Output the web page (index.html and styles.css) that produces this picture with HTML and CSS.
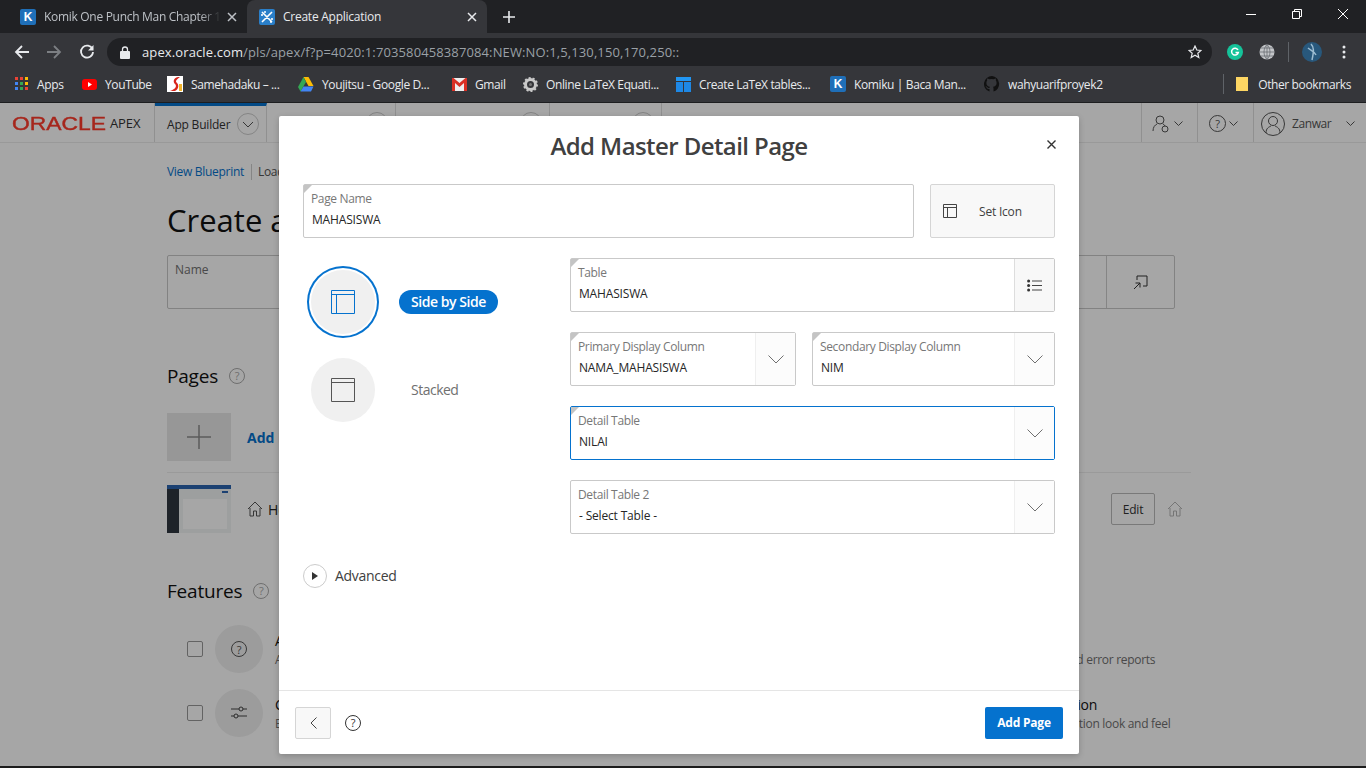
FILE: index.html
```html
<!DOCTYPE html>
<html lang="en">
<head>
<meta charset="utf-8">
<title>Create Application</title>
<link rel="stylesheet" href="styles.css">
</head>
<body>
<div class="browser">
  <div class="tabstrip">
    <div class="tab">
      <span class="fav fav-k">K</span>
      <span class="tab-title tab-fade">Komik One Punch Man Chapter 1</span>
      <svg class="tab-x" width="10" height="10" viewBox="0 0 10 10"><path d="M1 1l8 8M9 1l-8 8" stroke="#bdc1c6" stroke-width="1.5"/></svg>
    </div>
    <div class="tab tab-active">
      <svg class="fav-svg" width="16" height="16" viewBox="0 0 16 16"><rect width="16" height="16" rx="2" fill="#2a7fc9"/><path d="M3 3l10 10M13 3L3 13M5 3h2M3 5v2M11 13h2M13 9v2" stroke="#fff" stroke-width="1.6" fill="none"/></svg>
      <span class="tab-title tab-title-on">Create Application</span>
      <svg class="tab-x" width="10" height="10" viewBox="0 0 10 10"><path d="M1 1l8 8M9 1l-8 8" stroke="#e8eaed" stroke-width="1.5"/></svg>
    </div>
    <svg class="newtab" width="12" height="12" viewBox="0 0 12 12"><path d="M6 0v12M0 6h12" stroke="#e8eaed" stroke-width="1.6"/></svg>
    <div class="winctl">
      <svg width="10" height="10" viewBox="0 0 10 10"><path d="M0 5.5h10" stroke="#fff"/></svg>
      <svg width="10" height="10" viewBox="0 0 10 10"><path d="M.5 2.5h7v7h-7zM2.5 2.5v-2h7v7h-2" stroke="#fff" fill="none"/></svg>
      <svg width="10" height="10" viewBox="0 0 10 10"><path d="M0 0l10 10M10 0L0 10" stroke="#fff"/></svg>
    </div>
  </div>
  <div class="toolbar">
    <svg class="nav-ic" width="16" height="16" viewBox="0 0 16 16"><path d="M15 8H2M8 2L2 8l6 6" stroke="#e8eaed" stroke-width="1.8" fill="none"/></svg>
    <svg class="nav-ic" width="16" height="16" viewBox="0 0 16 16"><path d="M1 8h13M8 2l6 6-6 6" stroke="#7c7f83" stroke-width="1.8" fill="none"/></svg>
    <svg class="nav-ic" width="16" height="16" viewBox="0 0 16 16"><path d="M13.5 5.2A6 6 0 1 0 14 8" stroke="#e8eaed" stroke-width="1.8" fill="none"/><path d="M14.5 1v5.5H9z" fill="#e8eaed"/></svg>
    <div class="omnibox">
      <svg width="10" height="13" viewBox="0 0 10 13"><path d="M2.5 5V3.5a2.5 2.5 0 0 1 5 0V5" stroke="#e8eaed" stroke-width="1.3" fill="none"/><rect y="5" width="10" height="8" rx="1" fill="#e8eaed"/></svg>
      <span class="url"><span class="url-host">apex.oracle.com</span>/pls/apex/f?p=4020:1:703580458387084:NEW:NO:1,5,130,150,170,250::</span>
      <svg class="star" width="14" height="14" viewBox="0 0 14 14"><path d="M7 1l1.8 4 4.2.4-3.2 2.8 1 4.3L7 10.3l-3.8 2.2 1-4.3L1 5.4 5.2 5z" stroke="#e8eaed" stroke-width="1.2" fill="none"/></svg>
    </div>
    <div class="ext-icons">
      <svg width="16" height="16" viewBox="0 0 16 16"><circle cx="8" cy="8" r="8" fill="#15c39a"/><path d="M11 6a3.4 3.4 0 1 0 .3 2.5H8.500" stroke="#fff" stroke-width="1.5" fill="none"/></svg>
      <svg width="16" height="16" viewBox="0 0 16 16"><circle cx="8" cy="8" r="7.5" fill="#c4c6c9"/><path d="M0 8h16M8 0v16M1.500 4h13M1.500 12h13M8 .5c-4 4-4 11 0 15M8 .5c4 4 4 11 0 15" stroke="#5f6368" stroke-width=".7" fill="none"/></svg>
      <span class="ext-sep"></span>
      <svg class="avatar" width="20" height="20" viewBox="0 0 20 20"><circle cx="10" cy="10" r="10" fill="#28587c"/><path d="M9 2c3 3 3 7 1 16M6 6c2 2 6 3 8 7" stroke="#9dbdd2" stroke-width="1.500" fill="none"/></svg>
      <svg class="kebab" width="4" height="14" viewBox="0 0 4 14"><circle cx="2" cy="2" r="1.500" fill="#e8eaed"/><circle cx="2" cy="7" r="1.500" fill="#e8eaed"/><circle cx="2" cy="12" r="1.500" fill="#e8eaed"/></svg>
    </div>
  </div>
  <div class="bookmarks">
    <div class="bm">
      <svg width="14" height="14" viewBox="0 0 14 14"><path d="M0 0h3v3H0z" fill="#ea4335"/><path d="M5 0h3v3H5z" fill="#ea4335"/><path d="M10 0h3v3h-3z" fill="#fbbc05"/><path d="M0 5h3v3H0z" fill="#4285f4"/><path d="M5 5h3v3H5z" fill="#34a853"/><path d="M10 5h3v3h-3z" fill="#fbbc05"/><path d="M0 10h3v3H0z" fill="#4285f4"/><path d="M5 10h3v3H5z" fill="#34a853"/><path d="M10 10h3v3h-3z" fill="#ea4335"/></svg>
      <span>Apps</span>
    </div>
    <div class="bm">
      <svg width="15" height="15" viewBox="0 0 15 15"><rect y="2" width="15" height="11" rx="3" fill="#f00"/><path d="M6 5l4 2.500L6 10z" fill="#fff"/></svg>
      <span>YouTube</span>
    </div>
    <div class="bm">
      <svg width="16" height="16" viewBox="0 0 16 16"><rect width="16" height="16" fill="#fff"/><path d="M11 1C6 2 6 6 8 8s1 5-5 7h5c4-2 4-6 2-8S9 4 13 1z" fill="#d8261c"/><path d="M12 8v7h3V8z" fill="#f1b32a"/></svg>
      <span>Samehadaku – ...</span>
    </div>
    <div class="bm">
      <svg width="16" height="15" viewBox="0 0 16 15"><path d="M5.500 0h5l5 9h-5z" fill="#fbbc05"/><path d="M5.500 0L0 10l2.500 4.500L8 5z" fill="#34a853"/><path d="M2.500 14.500h10.500l2.500-5H5.500z" fill="#4285f4"/></svg>
      <span>Youjitsu - Google D...</span>
    </div>
    <div class="bm">
      <svg width="15" height="13" viewBox="0 0 15 13"><rect width="15" height="13" fill="#eee"/><path d="M0 0v13h3V5l4.500 4L12 5v8h3V0h-1.500L7.500 5 1.500 0z" fill="#d93025"/></svg>
      <span>Gmail</span>
    </div>
    <div class="bm">
      <svg width="15" height="15" viewBox="0 0 15 15"><circle cx="7.500" cy="7.500" r="5" fill="none" stroke="#c9c9c9" stroke-width="3"/><circle cx="7.500" cy="7.500" r="6.500" fill="none" stroke="#c9c9c9" stroke-width="2" stroke-dasharray="2 2"/><circle cx="7.500" cy="7.500" r="1.500" fill="#777"/></svg>
      <span>Online LaTeX Equati...</span>
    </div>
    <div class="bm">
      <svg width="15" height="15" viewBox="0 0 15 15"><path d="M0 0h15v4H0z" fill="#2196f3"/><path d="M0 5h7v10H0zM8 5h7v10H8z" fill="#1e88e5"/></svg>
      <span>Create LaTeX tables...</span>
    </div>
    <div class="bm">
      <span class="fav fav-k">K</span>
      <span>Komiku | Baca Man...</span>
    </div>
    <div class="bm">
      <svg width="16" height="16" viewBox="0 0 16 16"><path d="M8 0a8 8 0 0 0-2.500 15.600v-2.700C3.300 13.300 2.800 12 2.800 12c-.4-.9-.9-1.200-.9-1.200-.7-.5.100-.5.100-.5.800.1 1.200.8 1.200.8.700 1.200 1.900.9 2.300.7.100-.5.300-.9.500-1.100-1.800-.2-3.600-.9-3.600-4 0-.9.300-1.600.8-2.100-.1-.2-.4-1 .1-2.100 0 0 .7-.2 2.200.8a7.500 7.500 0 0 1 4 0c1.500-1 2.200-.8 2.200-.8.400 1.100.2 1.900.1 2.100.5.600.8 1.300.8 2.100 0 3.100-1.900 3.800-3.700 4 .3.300.6.800.6 1.500v3.400A8 8 0 0 0 8 0z" fill="#111"/></svg>
      <span>wahyuarifproyek2</span>
    </div>
    <span class="bm-spacer"></span>
    <span class="bm-sep"></span>
    <div class="bm bm-other">
      <svg width="12" height="14" viewBox="0 0 12 14"><path d="M0 0h9l3 0v14H0z" fill="#fdd663"/></svg>
      <span>Other bookmarks</span>
    </div>
  </div>
</div>

<div class="app">
  <header class="app-head">
    <div class="logo"><span class="logo-oracle">ORACLE</span><span class="logo-apex">APEX</span></div>
    <div class="navtab navtab-on"><span class="navtext">App Builder</span><span class="navchev"><svg width="12" height="7" viewBox="0 0 12 7"><path d="M1 1l5 5 5-5" stroke="#555" fill="none"/></svg></span></div>
    <div class="navtab navtab-a"><span class="navchev"></span></div>
    <div class="navtab navtab-b"><span class="navchev"></span></div>
    <div class="navtab navtab-c"><span class="navchev"></span></div>
    <span class="head-fill"></span>
    <div class="headbtn headbtn-a">
      <svg width="20" height="20" viewBox="0 0 20 20"><circle cx="8" cy="6" r="4" fill="none" stroke="#555"/><path d="M1 17c0-4 2-6 4-7M11 10c1 .500 1.500 1 2 2" stroke="#555" fill="none"/><circle cx="13" cy="15" r="3" fill="none" stroke="#555"/></svg>
      <svg width="9" height="5" viewBox="0 0 9 5"><path d="M.5.500l4 4 4-4" stroke="#555" fill="none"/></svg>
    </div>
    <div class="headbtn headbtn-b">
      <svg width="17" height="17" viewBox="0 0 17 17"><circle cx="8.500" cy="8.500" r="8" fill="none" stroke="#555"/><text x="8.500" y="12.500" text-anchor="middle" class="svg-q">?</text></svg>
      <svg width="9" height="5" viewBox="0 0 9 5"><path d="M.5.500l4 4 4-4" stroke="#555" fill="none"/></svg>
    </div>
    <div class="headbtn headbtn-c">
      <svg width="24" height="24" viewBox="0 0 24 24"><circle cx="12" cy="12" r="11.500" fill="none" stroke="#555"/><circle cx="12" cy="9" r="4.500" fill="none" stroke="#555"/><path d="M5 21c0-5 3-6 5-7M19 21c0-5-3-6-5-7" stroke="#555" fill="none"/></svg>
      <span class="user">Zanwar</span>
      <svg width="9" height="5" viewBox="0 0 9 5"><path d="M.5.500l4 4 4-4" stroke="#555" fill="none"/></svg>
    </div>
  </header>

  <main class="page">
    <div class="crumbs"><a class="crumb">View Blueprint</a><a class="crumb crumb-2">Load Blueprint</a></div>
    <h1 class="page-title">Create an Application</h1>
    <div class="namefield">
      <label class="namefield-label">Name</label>
      <span class="namefield-btn"><svg width="16" height="16" viewBox="0 0 16 16"><path d="M4 6V2h10v10h-4M1 15l6-6M2.500 9H7v4.500" stroke="#333" fill="none"/></svg></span>
    </div>
    <h2 class="sec-title sec-pages">Pages <span class="qmark">?</span></h2>
    <div class="addrow">
      <span class="addbox"><svg width="24" height="24" viewBox="0 0 24 24"><path d="M12 0v24M0 12h24" stroke="#8c8c8c" stroke-width="1.500"/></svg></span>
      <a class="addlink">Add Page</a>
    </div>
    <div class="pagerow">
      <div class="thumb"><div class="thumb-top"></div><div class="thumb-body"><div class="thumb-side"></div><div class="thumb-main"><span class="thumb-mark"></span><div class="thumb-panel"></div></div></div></div>
      <svg class="home" width="16" height="16" viewBox="0 0 16 16"><path d="M1 8l7-7 7 7M3 7v8h3.500v-5h3v5H13V7" stroke="#555" fill="none"/></svg>
      <span class="pagename">Home</span>
      <span class="rowfill"></span>
      <span class="editbtn">Edit</span>
      <svg class="home-2" width="16" height="16" viewBox="0 0 16 16"><path d="M1 8l7-7 7 7M3 7v8h3.500v-5h3v5H13V7" stroke="#b4b4b4" fill="none"/></svg>
    </div>
    <h2 class="sec-title sec-features">Features <span class="qmark">?</span></h2>
    <div class="features">
      <div class="feature">
        <span class="check"></span>
        <span class="feat-ic"><span class="qmark qmark-dark">?</span></span>
        <div class="feat-text"><div class="feat-name">About Page</div><div class="feat-desc">About this application</div></div>
      </div>
      <div class="feature">
        <div class="feat-text"><div class="feat-name">Reporting</div><div class="feat-desc">Page uses and error reports</div></div>
      </div>
      <div class="feature">
        <span class="check"></span>
        <span class="feat-ic"><svg width="16" height="16" viewBox="0 0 16 16"><path d="M0 4h16M0 11h16" stroke="#444"/><circle cx="10" cy="4" r="2" fill="#f0f0f0" stroke="#444"/><circle cx="5" cy="11" r="2" fill="#f0f0f0" stroke="#444"/></svg></span>
        <div class="feat-text"><div class="feat-name">Configuration Options</div><div class="feat-desc">Enable or disable</div></div>
      </div>
      <div class="feature">
        <div class="feat-text"><div class="feat-name">Theme Option</div><div class="feat-desc">Select application look and feel</div></div>
      </div>
    </div>
  </main>

  <div class="scrim">
    <section class="modal">
      <div class="modal-head">
        <span></span>
        <h2 class="modal-title">Add Master Detail Page</h2>
        <svg class="modal-x" width="9" height="9" viewBox="0 0 9 9"><path d="M.5.500l8 8M8.500.500l-8 8" stroke="#333" stroke-width="1.400"/></svg>
      </div>
      <div class="modal-body">
        <div class="top-row">
          <div class="field field-grow">
            <div class="field-main"><label class="field-label">Page Name</label><div class="field-value">MAHASISWA</div></div>
          </div>
          <div class="seticon">
            <svg width="14" height="14" viewBox="0 0 14 14"><path d="M.5.500h13v13H.5zM.5 3.500h13M4.500 3.500v10" stroke="#444" fill="none"/></svg>
            <span>Set Icon</span>
          </div>
        </div>
        <div class="cols">
          <div class="radios">
            <div class="radio">
              <span class="radio-wrap"><span class="radio-ic radio-ic-on"><svg width="24" height="24" viewBox="0 0 24 24"><path d="M.5.500h23v23H.5zM.5 4.500h23M5.500 4.500v19" stroke="#0572ce" fill="none"/></svg></span></span>
              <span class="radio-label radio-label-on">Side by Side</span>
            </div>
            <div class="radio">
              <span class="radio-wrap"><span class="radio-ic"><svg width="24" height="24" viewBox="0 0 24 24"><path d="M.5.500h23v23H.5zM.5 4.500h23" stroke="#555" fill="none"/></svg></span></span>
              <span class="radio-label">Stacked</span>
            </div>
          </div>
          <div class="fields">
            <div class="field">
              <div class="field-main"><label class="field-label">Table</label><div class="field-value">MAHASISWA</div></div>
              <span class="addon addon-list"><svg width="15" height="13" viewBox="0 0 15 13"><circle cx="1.600" cy="2" r="1.500" fill="#333"/><circle cx="1.600" cy="6.500" r="1.500" fill="#333"/><circle cx="1.600" cy="11" r="1.500" fill="#333"/><path d="M5 2h10M5 6.500h10M5 11h10" stroke="#444"/></svg></span>
            </div>
            <div class="field-pair">
              <div class="field">
                <div class="field-main"><label class="field-label">Primary Display Column</label><div class="field-value">NAMA_MAHASISWA</div></div>
                <span class="addon"><svg width="16" height="9" viewBox="0 0 16 9"><path d="M.5.500L8 8 15.500.500" stroke="#707070" fill="none"/></svg></span>
              </div>
              <div class="field">
                <div class="field-main"><label class="field-label">Secondary Display Column</label><div class="field-value">NIM</div></div>
                <span class="addon"><svg width="16" height="9" viewBox="0 0 16 9"><path d="M.5.500L8 8 15.500.500" stroke="#707070" fill="none"/></svg></span>
              </div>
            </div>
            <div class="field field-focus">
              <div class="field-main"><label class="field-label">Detail Table</label><div class="field-value">NILAI</div></div>
              <span class="addon"><svg width="16" height="9" viewBox="0 0 16 9"><path d="M.5.500L8 8 15.500.500" stroke="#707070" fill="none"/></svg></span>
            </div>
            <div class="field field-plain">
              <div class="field-main"><label class="field-label">Detail Table 2</label><div class="field-value">- Select Table -</div></div>
              <span class="addon"><svg width="16" height="9" viewBox="0 0 16 9"><path d="M.5.500L8 8 15.500.500" stroke="#707070" fill="none"/></svg></span>
            </div>
          </div>
        </div>
        <div class="advanced">
          <span class="adv-btn"><svg width="6" height="8" viewBox="0 0 6 8"><path d="M0 0l6 4-6 4z" fill="#333"/></svg></span>
          <span class="adv-text">Advanced</span>
        </div>
      </div>
      <div class="modal-foot">
        <span class="backbtn"><svg width="7" height="12" viewBox="0 0 7 12"><path d="M6.500.500L1 6l5.500 5.500" stroke="#444" fill="none"/></svg></span>
        <svg class="foot-help" width="16" height="16" viewBox="0 0 16 16"><circle cx="8" cy="8" r="7.500" fill="none" stroke="#333"/><text x="8" y="12" text-anchor="middle" class="svg-q svg-q-dark">?</text></svg>
        <span class="foot-fill"></span>
        <span class="addpage">Add Page</span>
      </div>
    </section>
  </div>
</div>
<div class="taskbar"></div>
</body>
</html>
```

FILE: styles.css
```css
* { box-sizing: border-box; }
html, body { margin: 0; padding: 0; }
body {
  width: 1366px;
  height: 768px;
  overflow: hidden;
  display: flex;
  flex-direction: column;
  font-family: "Open Sans", "Noto Sans", sans-serif;
  background: #fff;
  color: #262626;
}

/* Browser chrome */
.browser { flex: none; background: #35363a; color: #e8eaed; }
.tabstrip { height: 33px; background: #202124; display: flex; align-items: stretch; padding-left: 8px; }
.tab { width: 239px; height: 33px; display: flex; align-items: center; padding: 0 10px 0 12px; font-size: 12px; letter-spacing: -.3px; color: #bdc1c6; }
.tab-active { width: 240px; background: #35363a; border-radius: 8px 8px 0 0; letter-spacing: -.25px; }
.fav { flex: none; display: inline-flex; width: 16px; height: 16px; align-items: center; justify-content: center; border-radius: 2px; font: 700 12px "Liberation Sans", sans-serif; letter-spacing: 0; }
.fav-k { background: #1f6fb8; color: #fff; }
.fav-svg { flex: none; }
.tab-title { flex: 1; margin-left: 8px; white-space: nowrap; overflow: hidden; }
.tab-fade { -webkit-mask-image: linear-gradient(to right, #000 88%, transparent); mask-image: linear-gradient(to right, #000 88%, transparent); }
.tab-title-on { color: #e8eaed; }
.tab-x { flex: none; margin-left: 6px; }
.newtab { align-self: center; margin-left: 16px; }
.winctl { margin-left: auto; display: flex; align-items: center; gap: 36px; padding: 0 18px 5px 0; }

.toolbar { height: 35px; padding: 3px 0 0 14px; display: flex; align-items: center; }
.nav-ic { flex: none; margin-right: 16px; }
.nav-ic:nth-child(2) { margin-right: 17px; }
.nav-ic:nth-child(3) { margin-right: 12px; }
.omnibox { width: 1105px; height: 28px; border-radius: 14px; background: #202124; display: flex; align-items: center; padding: 0 10px 0 13px; }
.url { margin-left: 12px; font-size: 13px; letter-spacing: .115px; color: #9aa0a6; white-space: nowrap; flex: 1; }
.url-host { color: #e8eaed; }
.ext-icons { display: flex; align-items: center; margin-left: 15px; gap: 16px; }
.ext-sep { width: 1px; height: 20px; background: #5f6368; margin-left: -3px; }
.avatar { margin-left: -3px; }
.kebab { margin-left: 4px; }

.bookmarks { height: 35px; display: grid; grid-template-columns: 67px 85px 131px 154px 71px 153px 154px 154px 140px 1fr 1px auto; align-items: center; padding: 0 15px 2px; border-bottom: 1px solid #1d1e20; }
.bm { display: flex; align-items: center; gap: 8px; font-size: 12px; letter-spacing: -.38px; white-space: nowrap; color: #e8eaed; }
.bm svg { flex: none; }
.bm-sep { width: 1px; height: 20px; background: #5f6368; }
.bm-spacer { display: block; }
.bm-other { margin-left: 12px; gap: 10px; }

/* Dimmed application page */
.app { position: relative; flex: 1; min-height: 0; overflow: hidden; background: #fff; }
.app-head { height: 40px; display: flex; align-items: stretch; border-bottom: 1px solid #ececec; background: #fff; font-size: 12px; }
.logo { width: 155px; display: flex; align-items: center; padding-left: 12px; border-right: 1px solid #ddd; }
.logo-oracle { font: 400 18px "Liberation Sans", sans-serif; -webkit-text-stroke: .4px #ff3b2b; color: #ff3b2b; transform: scaleX(1.27); transform-origin: left center; width: 98px; flex: none; margin-top: 3px; }
.logo-apex { font-size: 13px; color: #333; letter-spacing: -.1px; }
.navtab { display: flex; align-items: center; justify-content: flex-end; border-right: 1px solid #ddd; padding: 0 7px 0 12px; }
.navtab-on { width: 112px; border-top: 3px solid #0572ce; justify-content: space-between; color: #333; letter-spacing: -.2px; }
.navtext { white-space: nowrap; }
.navtab-a { width: 129px; }
.navtab-b { width: 154px; }
.navtab-c { width: 112px; }
.navchev { width: 22px; height: 22px; border: 1px solid #ccc; border-radius: 50%; display: inline-flex; align-items: center; justify-content: center; flex: none; }
.head-fill { flex: 1; }
.headbtn { display: flex; align-items: center; gap: 2px; border-left: 1px solid #ddd; padding: 2px 0 0 10px; }
.headbtn-a { width: 56px; }
.headbtn-b { width: 56px; padding-left: 11px; gap: 3px; }
.headbtn-c { width: 113px; padding-left: 7px; gap: 6px; }
.user { color: #555; margin: 0 9px 0 1px; letter-spacing: -.4px; }

.page { padding: 21px 175px 0 167px; }
.crumbs { height: 16px; display: flex; font-size: 12px; line-height: 16px; margin-bottom: 21px; letter-spacing: -.3px; }
.crumb { color: #0572ce; }
.crumb-2 { margin-left: 7px; padding-left: 6px; border-left: 1px solid #ccc; color: #555; }
.page-title { margin: 0 0 14px; height: 40px; font-size: 31px; line-height: 38px; font-weight: 400; color: #111; }
.namefield { width: 1008px; height: 54px; border: 1px solid #c8c8c8; border-radius: 2px; display: flex; justify-content: space-between; margin-bottom: 54px; background: #fff; }
.namefield-label { font-size: 12px; color: #707070; padding: 5px 7px; }
.namefield-btn { width: 68px; border-left: 1px solid #ccc; display: flex; align-items: center; justify-content: center; }
.sec-title { margin: 0; height: 26px; padding-bottom: 1px; font-size: 19px; line-height: 24px; font-weight: 400; letter-spacing: -.2px; color: #111; display: flex; align-items: center; gap: 11px; }
.sec-pages { margin-bottom: 24px; }
.sec-features { margin-bottom: 21px; }
.qmark { width: 16px; height: 16px; border-radius: 50%; border: 1px solid #aaa; color: #aaa; display: inline-flex; align-items: center; justify-content: center; font-size: 11px; font-weight: 400; letter-spacing: 0; }
.qmark-dark { border-color: #555; color: #555; }
.addrow { display: flex; align-items: center; gap: 16px; padding-bottom: 11px; border-bottom: 1px solid #ededed; }
.addbox { width: 64px; height: 48px; background: #e9e9e9; display: flex; align-items: center; justify-content: center; }
.addlink { font-size: 14px; font-weight: 700; color: #0572ce; }
.pagerow { height: 48px; margin: 12px 8px 45px 0; display: flex; align-items: center; }
.thumb { width: 64px; height: 48px; display: flex; flex-direction: column; }
.thumb-top { height: 4px; background: #2b64b0; flex: none; }
.thumb-body { flex: 1; display: flex; }
.thumb-side { width: 12px; background: #2f3740; }
.thumb-main { flex: 1; background: #f2f5f5; padding: 10px 4px 4px; display: flex; flex-direction: column; position: relative; }
.thumb-mark { position: absolute; top: 2px; right: 3px; width: 6px; height: 2px; background: #2b64b0; }
.thumb-panel { background: #fff; flex: 1; }
.home { margin-left: 16px; }
.pagename { margin-left: 5px; font-size: 14px; color: #222; }
.rowfill { flex: 1; }
.editbtn { width: 44px; height: 32px; border: 1px solid #bbb; border-radius: 2px; display: flex; align-items: center; justify-content: center; font-size: 12px; letter-spacing: -.2px; color: #333; }
.home-2 { margin-left: 12px; }
.features { display: grid; grid-template-columns: 820px 1fr; row-gap: 16px; padding-left: 20px; }
.feature { height: 48px; display: flex; align-items: center; }
.check { width: 16px; height: 16px; border: 1px solid #999; border-radius: 2px; margin-right: 12px; }
.feat-ic { width: 48px; height: 48px; border-radius: 50%; background: #f0f0f0; display: flex; align-items: center; justify-content: center; margin-right: 12px; }
.feat-text { padding-top: 2px; }
.feat-name { font-size: 14px; line-height: 18px; letter-spacing: -.3px; color: #111; white-space: nowrap; }
.feat-desc { font-size: 12px; line-height: 18px; letter-spacing: -.3px; margin-top: 1px; color: #707070; white-space: nowrap; }

/* Overlay and modal */
.scrim { position: absolute; inset: 0; background: rgba(0, 0, 0, .35); padding: 13px 0 0 279px; }
.modal { width: 800px; height: 638px; background: #fff; display: flex; flex-direction: column; box-shadow: 0 2px 6px rgba(0, 0, 0, .2); border-radius: 2px; }
.modal-head { height: 58px; flex: none; display: grid; grid-template-columns: 1fr auto 1fr; align-items: center; padding: 0 24px; }
.modal-title { margin: 0; font-size: 24px; font-weight: 600; letter-spacing: -.58px; color: #404040; white-space: nowrap; }
.modal-x { justify-self: end; margin: 0 -1px 2px 0; }
.modal-body { flex: 1; min-height: 0; padding: 10px 24px 0; }
.top-row { display: flex; gap: 16px; margin-bottom: 20px; }
.field { position: relative; height: 54px; display: flex; border: 1px solid #c9c9c9; border-radius: 2px; background: #fff; }
.field::before { content: ""; position: absolute; left: 0; top: 0; border-style: solid; border-width: 8px 8px 0 0; border-color: #c4c4c4 transparent transparent transparent; }
.field-plain::before { display: none; }
.field-grow { flex: 1; }
.field-focus { border-color: #0572ce; }
.field-main { flex: 1; min-width: 0; padding: 6px 8px 0 7px; }
.field-label { display: block; font-size: 12px; line-height: 16px; letter-spacing: -.35px; color: #777; }
.field-value { font-size: 12px; line-height: 16px; letter-spacing: -.17px; margin-top: 5px; margin-left: 1px; color: #262626; white-space: nowrap; }
.addon { flex: none; width: 40px; border-left: 1px solid #efefef; background: #fcfcfc; display: flex; align-items: center; justify-content: center; }
.addon-list { background: #f8f8f8; border-left-color: #ddd; }
.seticon { width: 125px; height: 54px; border: 1px solid #d5d5d5; border-radius: 2px; background: #f8f8f8; display: flex; align-items: center; padding-left: 12px; gap: 22px; font-size: 12px; letter-spacing: -.2px; color: #404040; }
.cols { display: flex; }
.radios { width: 267px; flex: none; padding: 8px 0 0 4px; display: flex; flex-direction: column; gap: 16px; }
.radio { display: flex; align-items: center; gap: 20px; font-size: 14px; }
.radio-wrap { width: 72px; height: 72px; display: flex; align-items: center; justify-content: center; }
.radio-ic { width: 64px; height: 64px; border-radius: 50%; background: #f0f0f0; display: flex; align-items: center; justify-content: center; }
.radio-ic-on { box-shadow: 0 0 0 2px #fff, 0 0 0 4px #0572ce; }
.radio-label { padding: 0 12px; height: 24px; line-height: 24px; border-radius: 12px; color: #707070; letter-spacing: -.5px; white-space: nowrap; }
.radio-label-on { background: #0572ce; color: #fff; font-weight: 600; letter-spacing: -.45px; }
.fields { flex: 1; display: flex; flex-direction: column; gap: 20px; }
.field-pair { display: grid; grid-template-columns: 226px 243px; gap: 16px; }
.advanced { display: flex; align-items: center; gap: 8px; margin-top: 30px; font-size: 14px; line-height: 18px; letter-spacing: -.3px; color: #404040; }
.adv-text { padding-bottom: 1px; }
.adv-btn { width: 24px; height: 24px; border: 1px solid #ccc; border-radius: 50%; display: flex; align-items: center; justify-content: center; }
.modal-foot { height: 64px; flex: none; border-top: 1px solid #e5e5e5; display: flex; align-items: center; padding: 0 16px; }
.backbtn { width: 36px; height: 32px; border: 1px solid #d5d5d5; border-radius: 2px; background: #f8f8f8; display: flex; align-items: center; justify-content: center; }
.foot-help { margin-left: 14px; }
.foot-fill { flex: 1; }
.addpage { width: 78px; height: 32px; border-radius: 2px; background: #0572ce; color: #fff; display: flex; align-items: center; justify-content: center; font-size: 12px; font-weight: 700; letter-spacing: -.2px; }
.svg-q { font-size: 11px; fill: #555; font-family: "Open Sans", sans-serif; }
.svg-q-dark { fill: #333; }
.taskbar { flex: none; height: 2px; background: #1c1c1c; }
```
